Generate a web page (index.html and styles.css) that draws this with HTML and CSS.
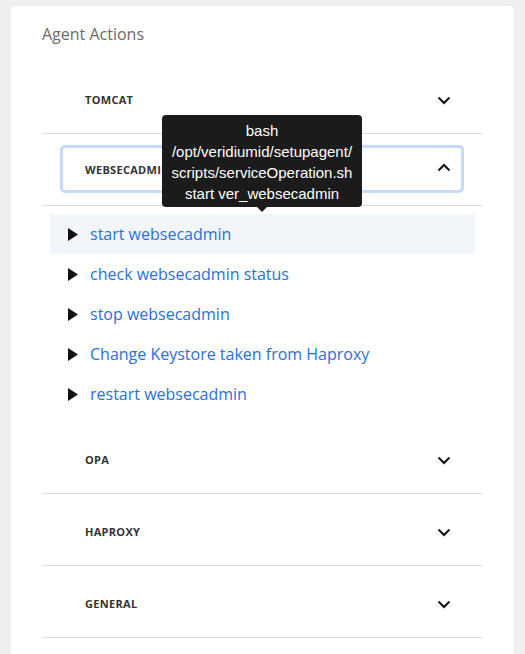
FILE: index.html
```html
<!DOCTYPE html>
<html>
<head>
<meta charset="utf-8">
<link rel="stylesheet" href="styles.css">
</head>
<body>
<div class="card">
  <h2 class="title">Agent Actions</h2>
  <div class="accordion">
    <div class="section">
      <div class="header"><div class="btn"><span class="label">TOMCAT</span><svg class="chev" viewBox="0 0 14 9" width="14" height="9"><path d="M1.5 1.5 L7 7 L12.5 1.5" fill="none" stroke="#111" stroke-width="2"/></svg></div></div>
    </div>
    <div class="section open">
      <div class="header"><div class="btn focused"><span class="label">WEBSECADMIN</span><svg class="chev" viewBox="0 0 14 9" width="14" height="9"><path d="M1.5 7.5 L7 2 L12.5 7.5" fill="none" stroke="#111" stroke-width="2"/></svg></div>
        <div class="tooltip">bash<br>/opt/veridiumid/setupagent/<br>scripts/serviceOperation.sh<br>start ver_websecadmin</div>
      </div>
      <ul class="actions">
        <li class="action hover"><svg class="tri" viewBox="0 0 10 13" width="10" height="13"><polygon points="0,0 10,6.5 0,13" fill="#111"/></svg><span>start websecadmin</span></li>
        <li class="action"><svg class="tri" viewBox="0 0 10 13" width="10" height="13"><polygon points="0,0 10,6.5 0,13" fill="#111"/></svg><span>check websecadmin status</span></li>
        <li class="action"><svg class="tri" viewBox="0 0 10 13" width="10" height="13"><polygon points="0,0 10,6.5 0,13" fill="#111"/></svg><span>stop websecadmin</span></li>
        <li class="action"><svg class="tri" viewBox="0 0 10 13" width="10" height="13"><polygon points="0,0 10,6.5 0,13" fill="#111"/></svg><span>Change Keystore taken from Haproxy</span></li>
        <li class="action"><svg class="tri" viewBox="0 0 10 13" width="10" height="13"><polygon points="0,0 10,6.5 0,13" fill="#111"/></svg><span>restart websecadmin</span></li>
      </ul>
    </div>
    <div class="section">
      <div class="header"><div class="btn"><span class="label">OPA</span><svg class="chev" viewBox="0 0 14 9" width="14" height="9"><path d="M1.5 1.5 L7 7 L12.5 1.5" fill="none" stroke="#111" stroke-width="2"/></svg></div></div>
    </div>
    <div class="section">
      <div class="header"><div class="btn"><span class="label">HAPROXY</span><svg class="chev" viewBox="0 0 14 9" width="14" height="9"><path d="M1.5 1.5 L7 7 L12.5 1.5" fill="none" stroke="#111" stroke-width="2"/></svg></div></div>
    </div>
    <div class="section">
      <div class="header"><div class="btn"><span class="label">GENERAL</span><svg class="chev" viewBox="0 0 14 9" width="14" height="9"><path d="M1.5 1.5 L7 7 L12.5 1.5" fill="none" stroke="#111" stroke-width="2"/></svg></div></div>
    </div>
  </div>
</div>
</body>
</html>
```

FILE: styles.css
```css
* { box-sizing: border-box; }
html, body { margin: 0; padding: 0; }
body {
  background: #efeff1;
  font-family: "Open Sans", "Liberation Sans", sans-serif;
  padding: 6px 11px 0 11px;
  height: 654px;
  overflow: hidden;
}
.card {
  background: #fff;
  width: 503px;
  border-radius: 5px;
  padding: 17px 32px 40px 31px;
}
.title {
  margin: 0;
  font-size: 16px;
  line-height: 22px;
  font-weight: 400;
  color: #6b6b6b;
}
.accordion { margin-top: 17px; }
.section { border-bottom: 1px solid #dedede; }
.section.open { border-bottom: none; }
.header {
  position: relative;
  padding: 13px 18px 10px 18px;
}
.open .header {
  padding: 11px 18px 12px 18px;
  border-bottom: 1px solid #dedede;
}
.btn {
  height: 48px;
  display: flex;
  align-items: center;
  justify-content: space-between;
  padding: 0 13px 0 25px;
  border-radius: 5px;
}
.btn.focused {
  border: 3px solid #c6dbfb;
  padding: 0 10px 0 22px;
}
.label {
  font-size: 11px;
  font-weight: 700;
  color: #333;
  letter-spacing: 0.3px;
}
.chev { display: block; margin-top: 2px; }
.focused .chev { margin-top: -4px; }
.focused .label { margin-top: 1px; }
.tooltip {
  position: absolute;
  left: 120px;
  top: -19px;
  width: 200px;
  padding: 5px 2px 3px;
  background: #1b1b1b;
  color: #fff;
  border-radius: 4px;
  font-family: "Liberation Sans", Arial, sans-serif;
  font-size: 15px;
  line-height: 21px;
  text-align: center;
  z-index: 5;
}
.tooltip::after {
  content: "";
  position: absolute;
  left: 94px;
  bottom: -5px;
  border-left: 6px solid transparent;
  border-right: 6px solid transparent;
  border-top: 6px solid #1b1b1b;
}
.actions {
  list-style: none;
  margin: 0;
  padding: 8px 7px 8px 8px;
}
.action {
  height: 40px;
  display: flex;
  align-items: center;
  padding-left: 18px;
  font-size: 16px;
  color: #2a6fdc;
}
.action.hover { background: #f2f6fb; }
.tri { display: block; margin-right: 12px; }
```
